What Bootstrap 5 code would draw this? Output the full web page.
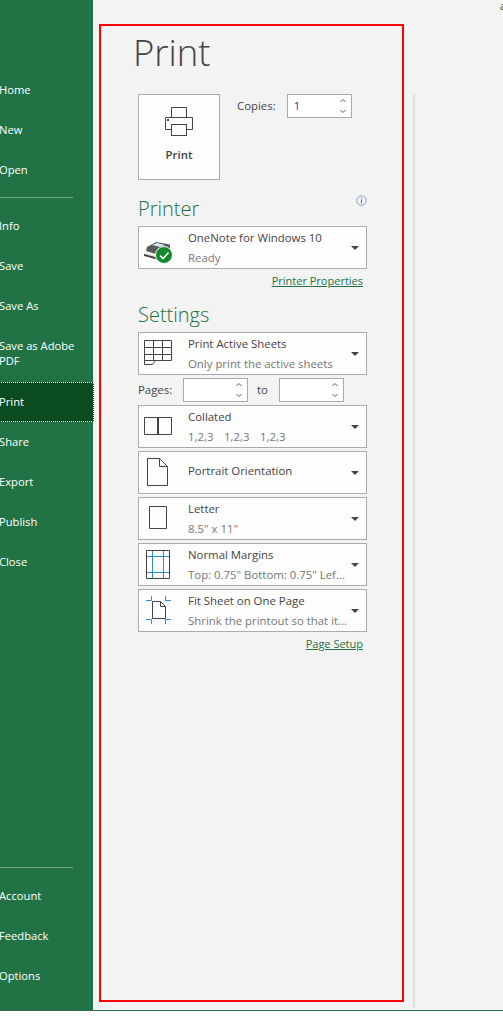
<!DOCTYPE html>
<html lang="en">
    <head>
        <meta charset="UTF-8">
        <meta name="viewport" content="width=device-width, initial-scale=1">
        <title>Print</title>
        <link href="https://cdn.jsdelivr.net/npm/bootstrap@5.3.0/dist/css/bootstrap.min.css" rel="stylesheet">
        <style>
            html, body { height: 100%; background: #fff; }
            body { font-family: "Open Sans", "Liberation Sans", sans-serif; font-size: 11.4px; color: #444; overflow: hidden; }
            .backstage { height: 1011px; background: #f3f3f3; border-bottom: 1px solid #2f6b4a; position: relative; overflow: hidden; }

            .side-bar { width: 93px; background: #217346; color: #fff; padding-top: 70px; padding-bottom: 14px; flex-shrink: 0; }
            .side-item { height: 40px; line-height: 40px; margin-left: -1px; font-size: 11.2px; color: #fff; }
            .side-item.two-line { height: 56px; line-height: 15px; padding-top: 12px; }
            .side-item.active-item { background: #0a4c1f; outline: 1px dotted #fff; outline-offset: -1px; margin-right: -1px; }
            .side-rule { height: 1px; background: #6fa688; width: 73px; margin-top: 7px; margin-bottom: 8px; }
            .side-rule.low-rule { margin-top: auto; }

            .print-pane { width: 229px; margin-left: 45px; }
            .pane-title { font-size: 36.5px; font-weight: 300; height: 94px; padding-top: 27px; margin: 0 0 0 -5px; color: #444; box-sizing: border-box; line-height: 50px; }
            .print-btn { width: 82px; height: 86px; background: #fdfdfd; border: 1px solid #ababab; border-radius: 0; padding: 12px 0 0; color: #444; font-size: 11.4px; font-weight: 600; }
            .print-btn svg { display: block; margin-bottom: 9px; }
            .copies-row { margin-left: 17px; gap: 11px; height: 24px; }
            .spin-box { width: 65px; height: 24px; background: #fff; border: 1px solid #ababab; padding-left: 6px; padding-right: 5px; }
            .spin-val { color: #5c2d7a; }
            .spin-arrows { display: block; }

            .group-head { height: 31px; margin-top: 15px; }
            .group-title { font-size: 20px; font-weight: 300; color: #1e6f42; line-height: 28px; margin: 0; }
            .info-mark { margin-left: auto; margin-right: 0; }
            .wide-drop { width: 229px; height: 43px; background: #fdfdfd; border: 1px solid #ababab; border-radius: 0; padding: 0; color: #444; text-align: left; font-size: 11.4px; }
            .drop-text { line-height: 20px; white-space: nowrap; }
            .drop-text.one-line { padding-bottom: 4px; }
            .drop-sub { color: #777; }
            .sub-cell { width: 36px; }
            .drop-caret { width: 0; height: 0; border-left: 4px solid transparent; border-right: 4px solid transparent; border-top: 4px solid #444; margin-left: auto; margin-right: 7px; }
            .pane-link { color: #217346; font-size: 11px; line-height: 24px; height: 24px; margin-right: 4px; text-decoration: underline; }
            .settings-title { margin-top: 8px; margin-bottom: 3px; }
            .pages-row { height: 24px; margin-top: 3px; margin-bottom: 3px; }
            .pages-label { width: 45px; }
            .to-label { width: 31px; padding-left: 9px; }
            .drop-stack { gap: 3px; }

            .pane-rule { width: 2px; background: #e1e1e1; position: absolute; left: 413px; top: 94px; bottom: 2px; }
            .red-frame { position: absolute; left: 99px; top: 24px; width: 305px; height: 978px; border: 2px solid #f00; }
            .edge-glyph { position: absolute; left: 500px; top: 0; line-height: 12px; font-size: 10px; color: #333; }
        </style>
    </head>
    <body>
        <div class="backstage d-flex">
            <nav class="side-bar d-flex flex-column">
                <div class="side-item">Home</div>
                <div class="side-item">New</div>
                <div class="side-item">Open</div>
                <div class="side-rule"></div>
                <div class="side-item">Info</div>
                <div class="side-item">Save</div>
                <div class="side-item">Save As</div>
                <div class="side-item two-line">Save as Adobe<br>PDF</div>
                <div class="side-item active-item">Print</div>
                <div class="side-item">Share</div>
                <div class="side-item">Export</div>
                <div class="side-item">Publish</div>
                <div class="side-item">Close</div>
                <div class="side-rule low-rule"></div>
                <div class="side-item">Account</div>
                <div class="side-item">Feedback</div>
                <div class="side-item">Options</div>
            </nav>

            <main class="print-pane">
                <h1 class="pane-title">Print</h1>

                <div class="d-flex align-items-start">
                    <button type="button" class="btn print-btn d-flex flex-column align-items-center">
                        <svg width="30" height="30" viewBox="0 0 30 30" fill="none" stroke="#444" stroke-width="1">
                            <path d="M7.5 11V.5h15V11"/>
                            <path d="M7.5 22.5h-6v-12h27v12h-6"/>
                            <rect x="7.5" y="17.5" width="15" height="11" fill="#fdfdfd"/>
                            <rect x="3" y="12" width="2" height="2" fill="#444" stroke="none"/>
                        </svg>
                        Print
                    </button>
                    <div class="d-flex align-items-center copies-row">
                        <span>Copies:</span>
                        <div class="spin-box d-flex align-items-center justify-content-between">
                            <span class="spin-val">1</span>
                            <svg class="spin-arrows" width="6" height="20" viewBox="0 0 6 20" fill="none" stroke="#555"><path d="M.5 6L3 3.500 5.500 6M.5 14L3 16.500 5.500 14"/></svg>
                        </div>
                    </div>
                </div>

                <div class="d-flex align-items-start group-head">
                    <h2 class="group-title">Printer</h2>
                    <svg class="info-mark" width="11" height="11" viewBox="0 0 11 11" fill="none"><circle cx="5.5" cy="5.5" r="4.8" stroke="#7da2d6"/><path d="M5.5 2.5v1M5.5 4.5v4" stroke="#3a6fb5"/></svg>
                </div>
                <button type="button" class="btn wide-drop d-flex align-items-center">
                    <svg width="49" height="41" viewBox="0 0 49 41" class="flex-shrink-0">
                        <path d="M8 20l9-5 14 2.500V24l-11 4-13-4z" fill="#5a5a5a"/>
                        <path d="M13 18l5-2 8 2-5 2z" fill="#cfe6f2"/>
                        <path d="M5 25l15 4v2L5 27z" fill="#e8e8e8"/>
                        <path d="M5 27l15 4v2L5 29z" fill="#444"/>
                        <circle cx="25" cy="28" r="8.500" fill="#0f8a2d" stroke="#fdfdfd"/>
                        <path d="M21 28.500l3 3 5.500-6" fill="none" stroke="#fff" stroke-width="1.600"/>
                    </svg>
                    <div class="drop-text"><div>OneNote for Windows 10</div><div class="drop-sub">Ready</div></div>
                    <span class="drop-caret"></span>
                </button>
                <div class="d-flex justify-content-end"><a class="pane-link" href="#">Printer Properties</a></div>

                <h2 class="group-title settings-title">Settings</h2>
                <button type="button" class="btn wide-drop d-flex align-items-center">
                    <svg width="49" height="41" viewBox="0 0 49 41" class="flex-shrink-0" fill="none" stroke="#444">
                        <path d="M5.500 7.500h27v20h-27zM5.500 14.500h27M5.500 21.500h27M14.500 7.500v20M23.500 7.500v20"/>
                        <path d="M5.500 27.500v4h8l3-4"/>
                    </svg>
                    <div class="drop-text"><div>Print Active Sheets</div><div class="drop-sub">Only print the active sheets</div></div>
                    <span class="drop-caret"></span>
                </button>

                <div class="d-flex align-items-center pages-row">
                    <span class="pages-label">Pages:</span>
                    <div class="spin-box d-flex align-items-center justify-content-end">
                        <svg class="spin-arrows" width="6" height="20" viewBox="0 0 6 20" fill="none" stroke="#555"><path d="M.5 6L3 3.500 5.500 6M.5 14L3 16.500 5.500 14"/></svg>
                    </div>
                    <span class="to-label">to</span>
                    <div class="spin-box d-flex align-items-center justify-content-end">
                        <svg class="spin-arrows" width="6" height="20" viewBox="0 0 6 20" fill="none" stroke="#555"><path d="M.5 6L3 3.500 5.500 6M.5 14L3 16.500 5.500 14"/></svg>
                    </div>
                </div>

                <div class="d-flex flex-column drop-stack">
                    <button type="button" class="btn wide-drop d-flex align-items-center">
                        <svg width="49" height="41" viewBox="0 0 49 41" class="flex-shrink-0" fill="none" stroke="#444">
                            <path d="M5.500 11.500h27v17h-27z"/>
                            <path d="M19 11v18" stroke-width="2"/>
                        </svg>
                        <div class="drop-text"><div>Collated</div><div class="drop-sub d-flex"><span class="sub-cell">1,2,3</span><span class="sub-cell">1,2,3</span><span class="sub-cell">1,2,3</span></div></div>
                        <span class="drop-caret"></span>
                    </button>
                    <button type="button" class="btn wide-drop d-flex align-items-center">
                        <svg width="49" height="41" viewBox="0 0 49 41" class="flex-shrink-0" fill="none" stroke="#444">
                            <path d="M8.500 6.500h12l8 8v19h-20zM20.500 6.500v8h8"/>
                        </svg>
                        <div class="drop-text one-line"><div>Portrait Orientation</div></div>
                        <span class="drop-caret"></span>
                    </button>
                    <button type="button" class="btn wide-drop d-flex align-items-center">
                        <svg width="49" height="41" viewBox="0 0 49 41" class="flex-shrink-0" fill="none" stroke="#444">
                            <path d="M10.500 8.500h17v22h-17z"/>
                        </svg>
                        <div class="drop-text"><div>Letter</div><div class="drop-sub">8.5" x 11"</div></div>
                        <span class="drop-caret"></span>
                    </button>
                    <button type="button" class="btn wide-drop d-flex align-items-center">
                        <svg width="49" height="41" viewBox="0 0 49 41" class="flex-shrink-0" fill="none">
                            <path d="M13.500 6.500v28M24.500 6.500v28M7.500 12.500h23M7.500 28.500h23" stroke="#2b8fd6"/>
                            <path d="M7.500 6.500h23v28h-23z" stroke="#444"/>
                        </svg>
                        <div class="drop-text"><div>Normal Margins</div><div class="drop-sub">Top: 0.75" Bottom: 0.75" Lef...</div></div>
                        <span class="drop-caret"></span>
                    </button>
                    <button type="button" class="btn wide-drop d-flex align-items-center">
                        <svg width="49" height="41" viewBox="0 0 49 41" class="flex-shrink-0" fill="none">
                            <path d="M7 10.500h5.500V6M26.500 6v4.500H32M7 29.500h5.500V34M26.500 34v-4.500H32" stroke="#2b8fd6"/>
                            <path d="M13.500 11.500h8l5 5v12h-13zM21.500 11.500v5h5" stroke="#444"/>
                        </svg>
                        <div class="drop-text"><div>Fit Sheet on One Page</div><div class="drop-sub">Shrink the printout so that it...</div></div>
                        <span class="drop-caret"></span>
                    </button>
                </div>
                <div class="d-flex justify-content-end"><a class="pane-link" href="#">Page Setup</a></div>
            </main>

            <div class="pane-rule"></div>
            <div class="red-frame"></div>
            <span class="edge-glyph">a</span>
        </div>

        <script src="https://cdn.jsdelivr.net/npm/bootstrap@5.3.0/dist/js/bootstrap.bundle.min.js"></script>
    </body>
</html>
